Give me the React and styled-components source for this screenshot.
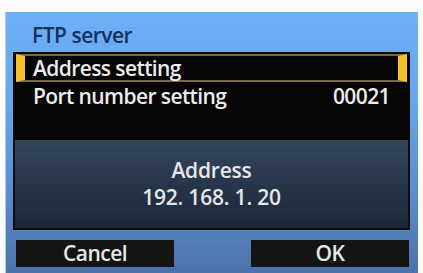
import React from "react";
import styled, { createGlobalStyle } from "styled-components";

const Global = createGlobalStyle`
  html, body {
    margin: 0;
    padding: 0;
    background: #fbfbfb;
  }
  body {
    font-family: "Open Sans", "Noto Sans", sans-serif;
  }
`;

const Page = styled.div`
  width: 423px;
  height: 273px;
  padding: 12px 5px 0 5px;
  box-sizing: border-box;
  overflow: hidden;
`;

const Panel = styled.div`
  height: 261px;
  box-sizing: border-box;
  padding: 0 8px 0 7px;
  border-left: 1px solid #a9cdf3;
  background: linear-gradient(#6db0f7 0%, #66a6ec 35%, #5a8ccc 70%, #4c72aa 100%);
  display: flex;
  flex-direction: column;
`;

const Title = styled.div`
  height: 40px;
  box-sizing: border-box;
  padding: 6px 0 0 19px;
  line-height: 34px;
  font-size: 21px;
  font-weight: 600;
  color: #14325e;
  letter-spacing: -0.5px;
`;

const List = styled.div`
  background: #070605;
  padding: 2px 3px 0 3px;
  height: 88px;
  box-sizing: border-box;
`;

const Row = styled.div`
  height: 28px;
  box-sizing: border-box;
  display: flex;
  align-items: center;
  justify-content: space-between;
  padding: 0 8px;
  border-style: solid;
  border-width: 2px 9px 2px 9px;
  border-color: ${(p) => (p.$active ? "#7a6a44" : "transparent")};
  border-left-color: ${(p) => (p.$active ? "#f1c12b" : "transparent")};
  border-right-color: ${(p) => (p.$active ? "#f1c12b" : "transparent")};
  font-size: 21px;
  font-weight: 600;
  color: #ececec;
  letter-spacing: -0.6px;
`;

const Box = styled.div`
  height: 90px;
  box-sizing: border-box;
  border: 2px solid #0b0b0c;
  border-top: none;
  background: linear-gradient(#35465d, #26344a 55%, #1d2738);
  display: flex;
  flex-direction: column;
  align-items: center;
  justify-content: center;
  color: #e6e6e6;
  font-size: 21px;
  font-weight: 600;
  line-height: 27px;
  letter-spacing: -0.2px;
`;

const Buttons = styled.div`
  display: flex;
  justify-content: space-between;
  margin-top: 10px;
  padding: 0 1px 0 3px;
`;

const Button = styled.div`
  width: 158px;
  height: 27px;
  background: #141414;
  color: #e8e8e8;
  font-size: 21px;
  font-weight: 600;
  line-height: 27px;
  text-align: center;
  letter-spacing: -0.5px;
`;

export default function App() {
  return (
    <>
      <Global />
      <Page>
        <Panel>
          <Title>FTP server</Title>
          <List>
            <Row $active>
              <span>Address setting</span>
            </Row>
            <Row>
              <span>Port number setting</span>
              <span>00021</span>
            </Row>
          </List>
          <Box>
            <div>Address</div>
            <div>192. 168. 1. 20</div>
          </Box>
          <Buttons>
            <Button>Cancel</Button>
            <Button>OK</Button>
          </Buttons>
        </Panel>
      </Page>
    </>
  );
}
